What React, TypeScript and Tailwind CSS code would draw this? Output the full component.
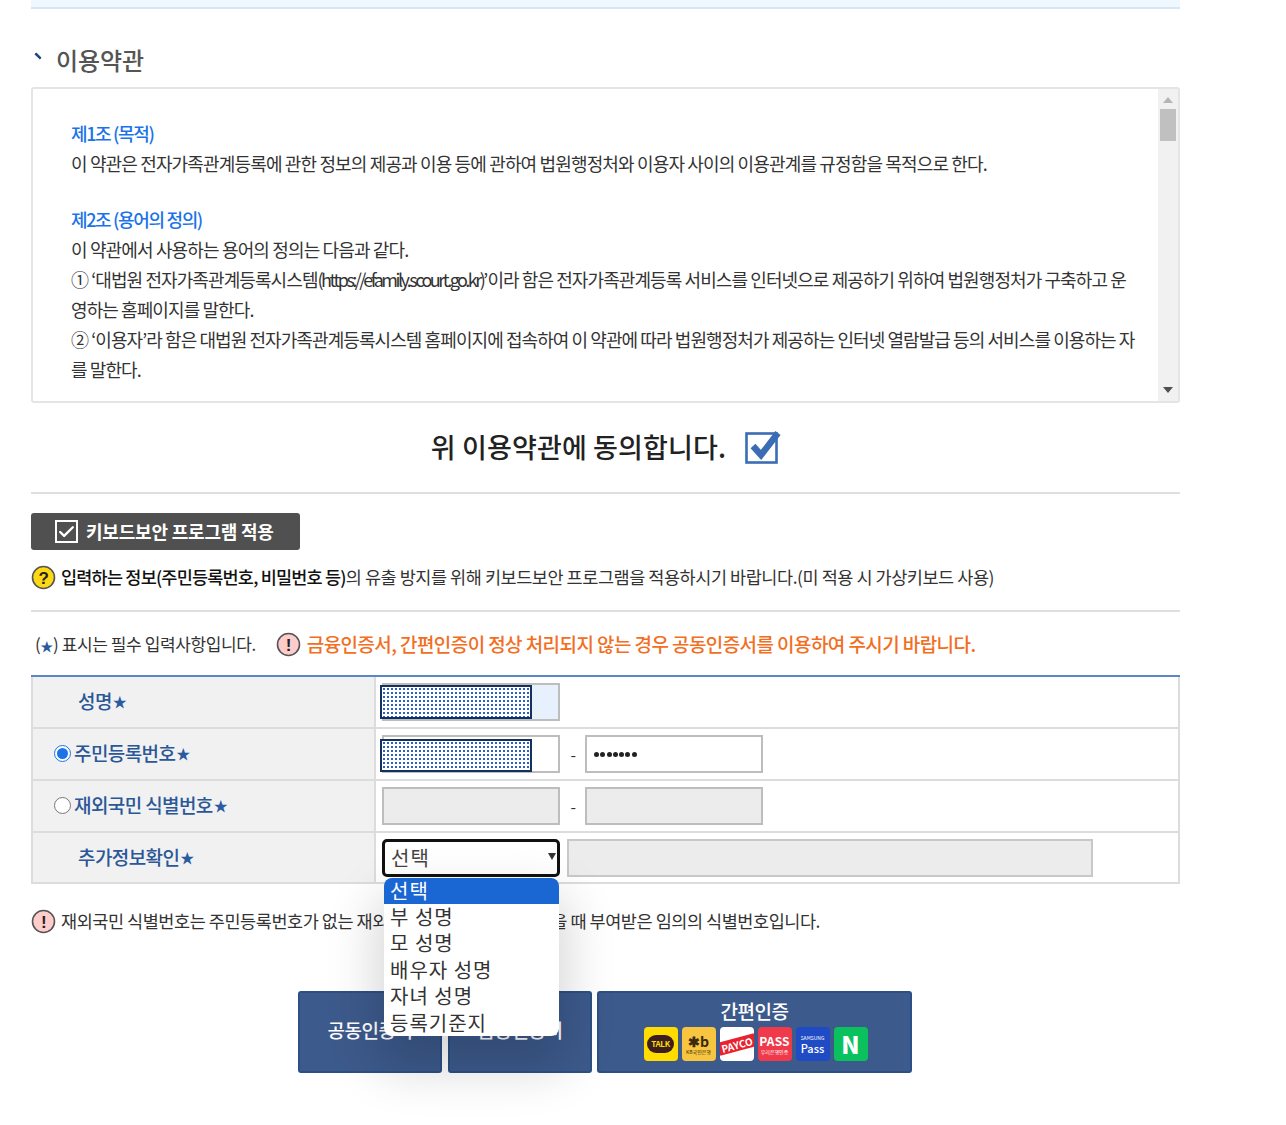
import { Check } from 'lucide-react'

const dotted =
  'absolute left-[-4px] bg-white bg-[radial-gradient(#2f62c0_1.1px,transparent_1.3px)] bg-[length:4px_4px] border-2 border-[#14305f]'

function Star() {
  return <span className="ml-[1px] text-[14px] text-[#2a5aa0]">★</span>
}

function NoticeIcon({ bg = '#fcc', mark = '!' }: { bg?: string; mark?: string }) {
  return (
    <svg width="25" height="25" viewBox="0 0 25 25" className="shrink-0">
      <circle cx="12.5" cy="12.5" r="11" fill={bg} stroke="#555" strokeWidth="1.6" />
      <text x="12.5" y="18.5" textAnchor="middle" fontSize="17" fontWeight="700" fill="#222" fontFamily="Liberation Sans">
        {mark}
      </text>
    </svg>
  )
}

function Radio({ checked }: { checked?: boolean }) {
  return (
    <span
      className={`mr-[3px] flex h-[17px] w-[17px] items-center justify-center rounded-full border-[1.5px] bg-white ${
        checked ? 'border-[#1a73e8]' : 'border-[#777]'
      }`}
    >
      {checked && <span className="h-[11px] w-[11px] rounded-full bg-[#1a73e8]" />}
    </span>
  )
}

function Row({
  label,
  radio,
  className = 'h-[52px]',
  children,
}: {
  label: string
  radio?: 'on' | 'off'
  className?: string
  children: React.ReactNode
}) {
  return (
    <div className={`flex border-b-2 border-[#dcdcdc] ${className}`}>
      <div
        className={`flex w-[345px] shrink-0 items-center border-x-2 border-[#dcdcdc] bg-[#f1f1f1] pb-[1px] text-[19px] font-medium tracking-[-0.6px] text-[#2b5797] ${
          radio ? 'pl-[21px]' : 'pl-[45px]'
        }`}
      >
        {radio && <Radio checked={radio === 'on'} />}
        {label}
        <Star />
      </div>
      <div className="flex flex-1 items-center border-r-2 border-[#dcdcdc] pl-[6px]">{children}</div>
    </div>
  )
}

function Field({ className = '', children }: { className?: string; children?: React.ReactNode }) {
  return (
    <div className={`relative h-[38px] w-[178px] border-2 border-[#bdbdbd] ${className}`}>{children}</div>
  )
}

function Brand({ className, children }: { className: string; children: React.ReactNode }) {
  return (
    <div className={`flex h-[34px] w-[34px] items-center justify-center overflow-hidden rounded-[4px] ${className}`}>
      {children}
    </div>
  )
}

export default function App() {
  return (
    <div className="relative min-h-[1125px] w-[1286px] overflow-hidden bg-white font-['Noto_Sans_CJK_KR','Noto_Sans',sans-serif] text-[#333]">
      <div className="ml-[31px] w-[1149px]">
        <div className="h-[9px] border-b-2 border-[#d6e6f5] bg-[#eff8fe]" />

        <div className="mt-[32px] flex h-[38px] items-center">
          <span className="mb-[6px] ml-[2px] h-[6px] w-[8px] rotate-45 rounded-[1px] border-t-[3px] border-[#1c4a80]" />
          <h2 className="ml-[15px] text-[24px] font-medium tracking-[-0.1px] text-[#555]">이용약관</h2>
        </div>

        <div className="relative mt-[8px] h-[316px] overflow-hidden rounded-[3px] border-2 border-[#e4e4e4] pl-[38px] pr-[38px] pt-[29px] text-[18px] leading-[30px] tracking-[-0.85px] break-all">
          <p className="font-medium tracking-[-1.35px] text-[#1a73e8]">제1조 (목적)</p>
          <p>이 약관은 전자가족관계등록에 관한 정보의 제공과 이용 등에 관하여 법원행정처와 이용자 사이의 이용관계를 규정함을 목적으로 한다.</p>
          <p className="mt-[26px] font-medium tracking-[-1.35px] text-[#1a73e8]">제2조 (용어의 정의)</p>
          <p>이 약관에서 사용하는 용어의 정의는 다음과 같다.</p>
          <p className="tracking-[-0.91px]">
            ① ‘대법원 전자가족관계등록시스템<span className="tracking-[-2.5px]">(https://efamily.scourt.go.kr)</span>’이라 함은 전자가족관계등록 서비스를 인터넷으로 제공하기 위하여 법원행정처가 구축하고 운영하는 홈페이지를 말한다.
          </p>
          <p className="tracking-[-0.92px]">② ‘이용자’라 함은 대법원 전자가족관계등록시스템 홈페이지에 접속하여 이 약관에 따라 법원행정처가 제공하는 인터넷 열람발급 등의 서비스를 이용하는 자를 말한다.</p>

          <div className="absolute bottom-0 right-0 top-0 flex w-[20px] flex-col items-center bg-[#f1f1f1]">
            <svg width="10" height="6" viewBox="0 0 10 6" className="mt-[8px]">
              <path d="M5 0 10 6H0z" fill="#b5b5b5" />
            </svg>
            <div className="mt-[6px] h-[32px] w-[16px] bg-[#c0c0c0]" />
            <svg width="10" height="6" viewBox="0 0 10 6" className="mb-[8px] mt-auto">
              <path d="M0 0H10L5 6z" fill="#505050" />
            </svg>
          </div>
        </div>

        <div className="mt-[24px] flex h-[40px] items-center justify-center pl-[2px]">
          <span className="text-[27px] font-medium tracking-[0.15px] text-[#222]">위 이용약관에 동의합니다.</span>
          <svg width="37" height="34" viewBox="0 0 37 34" className="ml-[19px]">
            <rect x="1.5" y="3.5" width="30" height="29" fill="none" stroke="#3a6db5" strokeWidth="2.6" />
            <path d="M8 16l8 9L33 3" fill="none" stroke="#3a6db5" strokeWidth="6.5" />
          </svg>
        </div>

        <div className="mt-[25px] h-[2px] bg-[#dfdfdf]" />

        <button className="mt-[19px] flex h-[37px] w-[269px] items-center rounded-[3px] bg-[#505050] pl-[24px] text-[18px] font-bold tracking-[-0.2px] text-white">
          <span className="mr-[8px] flex h-[23px] w-[23px] items-center justify-center border-2 border-white">
            <Check size={20} strokeWidth={3} />
          </span>
          키보드보안 프로그램 적용
        </button>

        <div className="mt-[13px] flex h-[28px] items-center text-[17.5px] tracking-[-0.45px]">
          <NoticeIcon bg="#ffd814" mark="?" />
          <p className="ml-[5px]">
            <span className="font-medium tracking-[-0.8px] text-[#111]">입력하는 정보(주민등록번호, 비밀번호 등)</span>의 유출 방지를 위해 키보드보안 프로그램을 적용하시기 바랍니다.(미 적용 시 가상키보드 사용)
          </p>
        </div>

        <div className="mt-[19px] h-[2px] bg-[#dfdfdf]" />

        <div className="mt-[18px] flex h-[28px] items-center">
          <span className="ml-[4px] text-[17px] tracking-[-0.4px]">
            (<span className="text-[13px] text-[#2a5aa0]">★</span>) 표시는 필수 입력사항입니다.
          </span>
          <span className="ml-[20px]">
            <NoticeIcon />
          </span>
          <span className="ml-[6px] text-[19px] font-medium tracking-[-0.58px] text-[#f26e22]">
            금융인증서, 간편인증이 정상 처리되지 않는 경우 공동인증서를 이용하여 주시기 바랍니다.
          </span>
        </div>

        <div className="mt-[17px] border-t-2 border-[#5b87c7]">
          <Row label="성명">
            <Field className="bg-[#e7f0fd]">
              <div className={`${dotted} top-[0px] h-[34px] w-[152px]`} />
            </Field>
          </Row>
          <Row label="주민등록번호" radio="on">
            <Field>
              <div className={`${dotted} top-[2px] h-[33px] w-[152px]`} />
            </Field>
            <span className="mx-[10.5px] w-[4px] text-[#333]">-</span>
            <Field className="flex items-center gap-[1.3px] pl-[7px]">
              {[0, 1, 2, 3, 4, 5, 6].map((i) => (
                <span key={i} className="h-[5px] w-[5px] rounded-full bg-[#222]" />
              ))}
            </Field>
          </Row>
          <Row label="재외국민 식별번호" radio="off">
            <Field className="bg-[#ececec]" />
            <span className="mx-[10.5px] w-[4px] text-[#333]">-</span>
            <Field className="bg-[#ececec]" />
          </Row>
          <Row label="추가정보확인" className="h-[51px]">
            <div className="relative">
              <div className="flex h-[38px] w-[178px] items-center rounded-[5px] border-[3px] border-[#111] bg-white pl-[6px] text-[20px] tracking-[1px] text-[#444]">
                선택
                <svg width="8" height="8" viewBox="0 0 8 8" className="absolute right-[4px] top-[13px]">
                  <path d="M0 1H8L4 8z" fill="#333" />
                </svg>
              </div>
              <div className="absolute left-[2px] top-[39px] z-10 w-[175px] overflow-hidden rounded-[8px] bg-white text-[20px] leading-[26.4px] tracking-[1px] text-[#333] shadow-[0_25px_50px_8px_rgba(0,0,0,0.16)]">
                <div className="bg-[#1a66d2] pl-[6px] text-white">선택</div>
                <div className="pl-[6px]">부 성명</div>
                <div className="pl-[6px]">모 성명</div>
                <div className="pl-[6px]">배우자 성명</div>
                <div className="pl-[6px]">자녀 성명</div>
                <div className="pl-[6px]">등록기준지</div>
              </div>
            </div>
            <div className="ml-[7px] h-[38px] w-[526px] border-2 border-[#c8c8c8] bg-[#ececec]" />
          </Row>
        </div>

        <div className="mt-[23px] flex h-[28px] items-center text-[17.5px] tracking-[-0.45px]">
          <NoticeIcon />
          <p className="ml-[5px]">재외국민 식별번호는 주민등록번호가 없는 재외국민이 여권으로 발급받을 때 부여받은 임의의 식별번호입니다.</p>
        </div>

        <div className="ml-[267px] mt-[56px] flex h-[82px] text-white">
          <div className="flex w-[144px] items-center justify-center rounded-[3px] border-2 border-[#2c4f85] bg-[#3d5a8c] pb-[3px] text-[19px] font-medium tracking-[-0.5px]">
            공동인증서
          </div>
          <div className="ml-[6px] flex w-[144px] items-center justify-center rounded-[3px] border-2 border-[#2c4f85] bg-[#3d5a8c] pb-[3px] text-[19px] font-medium tracking-[-0.5px]">
            금융인증서
          </div>
          <div className="ml-[5px] flex w-[315px] flex-col items-center rounded-[3px] border-2 border-[#2c4f85] bg-[#3d5a8c] pt-[4px]">
            <div className="text-[19px] font-medium leading-[27px] tracking-[-0.5px]">간편인증</div>
            <div className="ml-[2px] mt-[3px] flex gap-[4px]">
              <Brand className="bg-[#ffdc00]">
                <span className="flex h-[18px] w-[27px] items-center justify-center rounded-full bg-[#3c1e1e] text-[8px] font-bold tracking-[-0.3px] text-[#ffdc00]">
                  TALK
                </span>
              </Brand>
              <Brand className="flex-col bg-[#f7c53f] text-[#3b2a10]">
                <span className="text-[14px] font-bold leading-[16px]">✱b</span>
                <span className="text-[5px] leading-[6px]">KB국민은행</span>
              </Brand>
              <Brand className="bg-white">
                <span className="-rotate-[15deg] whitespace-nowrap bg-[#e8232f] px-[3px] text-[10px] font-bold leading-[13px] text-white">
                  PAYCO
                </span>
              </Brand>
              <Brand className="flex-col bg-[#f03a4b]">
                <span className="text-[12px] font-bold leading-[14px] tracking-[0.2px]">PASS</span>
                <span className="text-[5px] leading-[7px]">우리은행인증</span>
              </Brand>
              <Brand className="flex-col bg-[#1f4bc4]">
                <span className="text-[5px] leading-[8px]">SAMSUNG</span>
                <span className="text-[11px] font-medium leading-[12px]">Pass</span>
              </Brand>
              <Brand className="bg-[#0bc15d]">
                <span className="text-[24px] font-black leading-none">N</span>
              </Brand>
            </div>
          </div>
        </div>
      </div>
    </div>
  )
}
